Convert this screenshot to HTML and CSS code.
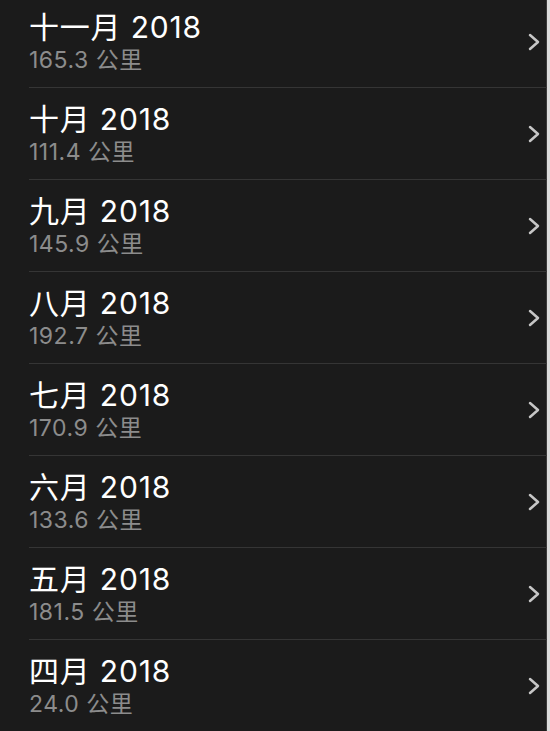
FILE: index.html
```html
<!DOCTYPE html>
<html lang="zh">
<head>
    <meta charset="UTF-8">
    <meta name="viewport" content="width=device-width, initial-scale=1.0">
    <title>月度距离</title>
    <link rel="stylesheet" href="styles.css">
</head>
<body>
    <ul class="months">
        <li class="month">
            <div class="info">
                <div class="title">十一月 2018</div>
                <div class="distance">165.3 公里</div>
            </div>
            <svg class="chevron" width="12" height="18" viewBox="0 0 12 18"><polyline points="2,2 10,9 2,16"/></svg>
        </li>
        <li class="month">
            <div class="info">
                <div class="title">十月 2018</div>
                <div class="distance">111.4 公里</div>
            </div>
            <svg class="chevron" width="12" height="18" viewBox="0 0 12 18"><polyline points="2,2 10,9 2,16"/></svg>
        </li>
        <li class="month">
            <div class="info">
                <div class="title">九月 2018</div>
                <div class="distance">145.9 公里</div>
            </div>
            <svg class="chevron" width="12" height="18" viewBox="0 0 12 18"><polyline points="2,2 10,9 2,16"/></svg>
        </li>
        <li class="month">
            <div class="info">
                <div class="title">八月 2018</div>
                <div class="distance">192.7 公里</div>
            </div>
            <svg class="chevron" width="12" height="18" viewBox="0 0 12 18"><polyline points="2,2 10,9 2,16"/></svg>
        </li>
        <li class="month">
            <div class="info">
                <div class="title">七月 2018</div>
                <div class="distance">170.9 公里</div>
            </div>
            <svg class="chevron" width="12" height="18" viewBox="0 0 12 18"><polyline points="2,2 10,9 2,16"/></svg>
        </li>
        <li class="month">
            <div class="info">
                <div class="title">六月 2018</div>
                <div class="distance">133.6 公里</div>
            </div>
            <svg class="chevron" width="12" height="18" viewBox="0 0 12 18"><polyline points="2,2 10,9 2,16"/></svg>
        </li>
        <li class="month">
            <div class="info">
                <div class="title">五月 2018</div>
                <div class="distance">181.5 公里</div>
            </div>
            <svg class="chevron" width="12" height="18" viewBox="0 0 12 18"><polyline points="2,2 10,9 2,16"/></svg>
        </li>
        <li class="month">
            <div class="info">
                <div class="title">四月 2018</div>
                <div class="distance">24.0 公里</div>
            </div>
            <svg class="chevron" width="12" height="18" viewBox="0 0 12 18"><polyline points="2,2 10,9 2,16"/></svg>
        </li>
    </ul>
</body>
</html>
```
FILE: styles.css
```css
html, body {
    margin: 0;
    padding: 0;
    height: 100%;
}
body {
    font-family: Inter, "Noto Sans CJK SC", sans-serif;
    background-color: #1b1b1b;
    color: #fff;
    overflow: hidden;
    box-sizing: border-box;
    border-right: 3px solid #dcdcdc;
    box-shadow: inset -1px 0 0 #3a3a3a;
}
.months {
    list-style: none;
    margin: -4px 0 0 0;
    padding: 0;
}
.month {
    display: flex;
    align-items: center;
    justify-content: space-between;
    height: 91px;
    margin-left: 29px;
    padding-right: 7px;
    border-bottom: 1px solid #353535;
}
.info {
    padding-top: 13px;
    align-self: flex-start;
}
.title {
    font-size: 30px;
    line-height: 36px;
    letter-spacing: 0.8px;
    color: #fff;
}
.distance {
    font-size: 23px;
    line-height: 30px;
    letter-spacing: 0.5px;
    color: #8c8c8c;
}
.chevron {
    fill: none;
    stroke: #c6c6c6;
    stroke-width: 2.5;
    stroke-linecap: round;
    stroke-linejoin: round;
}
```
